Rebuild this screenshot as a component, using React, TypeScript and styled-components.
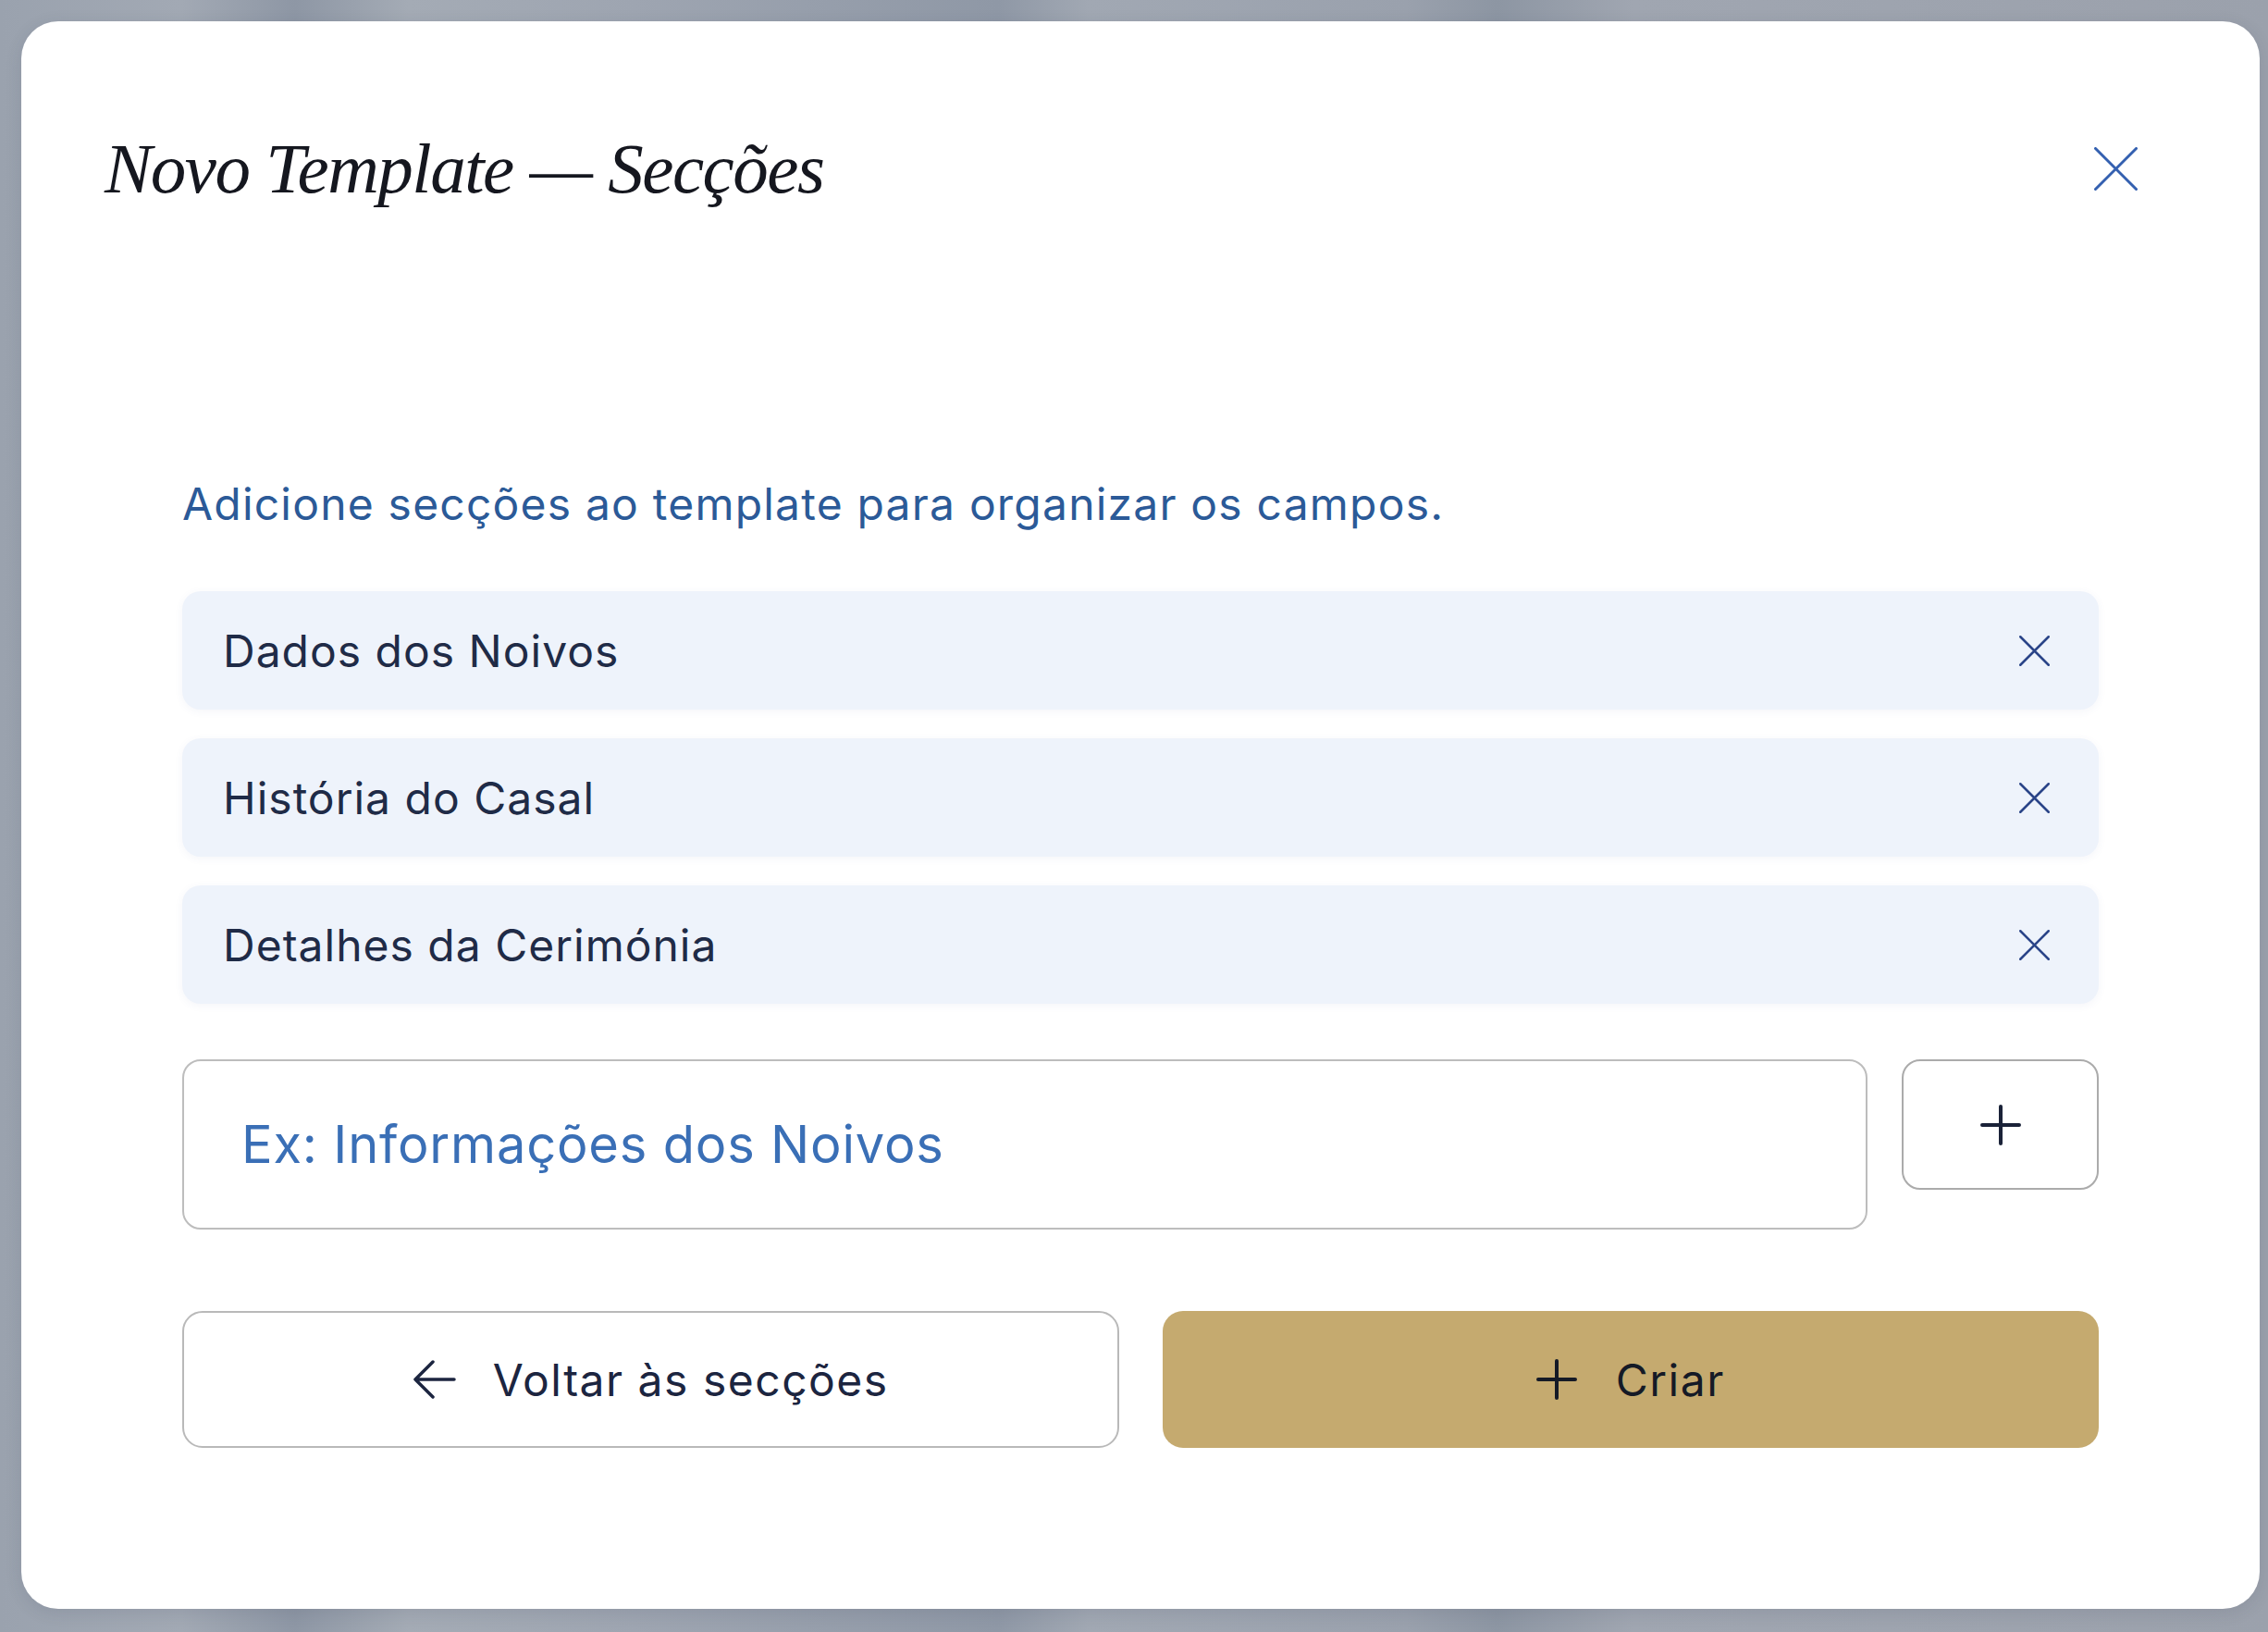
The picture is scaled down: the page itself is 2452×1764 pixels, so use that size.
import React from "react";
import styled, { createGlobalStyle } from "styled-components";

const GlobalStyle = createGlobalStyle`
  html, body {
    margin: 0;
    padding: 0;
  }
  body {
    font-family: "Inter", "Noto Sans", sans-serif;
  }
  * {
    box-sizing: border-box;
  }
`;

const Backdrop = styled.div`
  width: 100vw;
  height: 100vh;
  display: flex;
  padding: 23px 9px 25px 23px;
  background: linear-gradient(
    90deg,
    #9aa2ae 0%,
    #a2a9b4 8%,
    #8e97a5 13%,
    #a4abb5 18%,
    #9ea5b1 28%,
    #8f98a6 44%,
    #a1a8b3 48%,
    #9aa1ad 62%,
    #8d96a3 66%,
    #a0a6b1 72%,
    #9ba1ac 100%
  );
`;

const Modal = styled.div`
  flex: 1;
  display: flex;
  flex-direction: column;
  background: #ffffff;
  border-radius: 40px;
  box-shadow: 0 4px 18px rgba(40, 50, 70, 0.12);
`;

const Header = styled.div`
  height: 320px;
  display: flex;
  align-items: center;
  justify-content: space-between;
  padding: 0 132px 0 90px;
`;

const Title = styled.h1`
  margin: 0;
  font-family: "Liberation Serif", "DejaVu Serif", serif;
  font-style: italic;
  font-weight: 400;
  font-size: 77px;
  letter-spacing: -1.5px;
  line-height: 1;
  color: #15171f;
`;

const IconButton = styled.button`
  display: flex;
  align-items: center;
  justify-content: center;
  padding: 0;
  border: none;
  background: transparent;
  cursor: pointer;
`;

const Body = styled.div`
  flex: 1;
  display: flex;
  flex-direction: column;
  padding: 174px 174px 174px;
`;

const Description = styled.p`
  margin: 0 0 64px;
  font-size: 48px;
  line-height: 60px;
  letter-spacing: 1.2px;
  color: #2b5a98;
`;

const SectionList = styled.div`
  display: flex;
  flex-direction: column;
  gap: 31px;
  margin-bottom: 60px;
`;

const SectionItem = styled.div`
  height: 128px;
  display: flex;
  align-items: center;
  justify-content: space-between;
  padding: 0 53px 0 44px;
  border-radius: 20px;
  background: #eef3fb;
  box-shadow: 0 2px 10px rgba(60, 90, 150, 0.06);
`;

const SectionName = styled.span`
  font-size: 48px;
  letter-spacing: 1px;
  color: #1f2b47;
`;

const InputRow = styled.div`
  display: flex;
  align-items: flex-start;
  gap: 37px;
  margin-bottom: 88px;
`;

const SectionInput = styled.input`
  flex: 1;
  min-width: 0;
  height: 184px;
  padding: 0 0 0 62px;
  border: 2px solid #bdbdbd;
  border-radius: 20px;
  background: #ffffff;
  font-family: "Inter", "Noto Sans", sans-serif;
  font-size: 56px;
  letter-spacing: 0.8px;
  color: #1f2b47;
  outline: none;

  &::placeholder {
    color: #3a6fb6;
  }
`;

const AddButton = styled.button`
  width: 213px;
  height: 141px;
  display: flex;
  align-items: center;
  justify-content: center;
  border: 2px solid #ababab;
  border-radius: 20px;
  background: #ffffff;
  cursor: pointer;
`;

const Actions = styled.div`
  display: grid;
  grid-template-columns: 1fr 1fr;
  gap: 47px;
`;

const ActionButton = styled.button<{ $primary?: boolean }>`
  height: 148px;
  display: flex;
  align-items: center;
  justify-content: center;
  gap: ${(p) => (p.$primary ? "42px" : "40px")};
  border: ${(p) => (p.$primary ? "none" : "2px solid #b9b9b9")};
  border-radius: 22px;
  background: ${(p) => (p.$primary ? "#c5aa6f" : "#ffffff")};
  font-family: "Inter", "Noto Sans", sans-serif;
  font-size: 48px;
  letter-spacing: 1.5px;
  color: ${(p) => (p.$primary ? "#151a26" : "#1c2540")};
  cursor: pointer;
`;

const Cross = ({ size, stroke, color }: { size: number; stroke: number; color: string }) => (
  <svg width={size} height={size} viewBox={`0 0 ${size} ${size}`} fill="none">
    <path
      d={`M${stroke / 2} ${stroke / 2} L${size - stroke / 2} ${size - stroke / 2} M${size - stroke / 2} ${stroke / 2} L${stroke / 2} ${size - stroke / 2}`}
      stroke={color}
      strokeWidth={stroke}
      strokeLinecap="round"
    />
  </svg>
);

const PlusIcon = ({ size, stroke, color }: { size: number; stroke: number; color: string }) => (
  <svg width={size} height={size} viewBox={`0 0 ${size} ${size}`} fill="none">
    <path
      d={`M${size / 2} ${stroke / 2} V${size - stroke / 2} M${stroke / 2} ${size / 2} H${size - stroke / 2}`}
      stroke={color}
      strokeWidth={stroke}
      strokeLinecap="round"
    />
  </svg>
);

const ArrowLeft = () => (
  <svg width="47" height="42" viewBox="0 0 47 42" fill="none">
    <path
      d="M45 21 H3 M22 2 L3 21 L22 40"
      stroke="#1c2540"
      strokeWidth="3.5"
      strokeLinecap="round"
      strokeLinejoin="round"
    />
  </svg>
);

const sections = ["Dados dos Noivos", "História do Casal", "Detalhes da Cerimónia"];

export default function App() {
  return (
    <>
      <GlobalStyle />
      <Backdrop>
        <Modal>
          <Header>
            <Title>Novo Template — Secções</Title>
            <IconButton aria-label="Fechar">
              <Cross size={47} stroke={3} color="#3460b0" />
            </IconButton>
          </Header>
          <Body>
            <Description>Adicione secções ao template para organizar os campos.</Description>
            <SectionList>
              {sections.map((name) => (
                <SectionItem key={name}>
                  <SectionName>{name}</SectionName>
                  <IconButton aria-label={`Remover ${name}`}>
                    <Cross size={33} stroke={2.5} color="#2a4488" />
                  </IconButton>
                </SectionItem>
              ))}
            </SectionList>
            <InputRow>
              <SectionInput placeholder="Ex: Informações dos Noivos" />
              <AddButton aria-label="Adicionar secção">
                <PlusIcon size={44} stroke={4} color="#1a2238" />
              </AddButton>
            </InputRow>
            <Actions>
              <ActionButton>
                <ArrowLeft />
                <span>Voltar às secções</span>
              </ActionButton>
              <ActionButton $primary>
                <PlusIcon size={44} stroke={4} color="#151a26" />
                <span>Criar</span>
              </ActionButton>
            </Actions>
          </Body>
        </Modal>
      </Backdrop>
    </>
  );
}
